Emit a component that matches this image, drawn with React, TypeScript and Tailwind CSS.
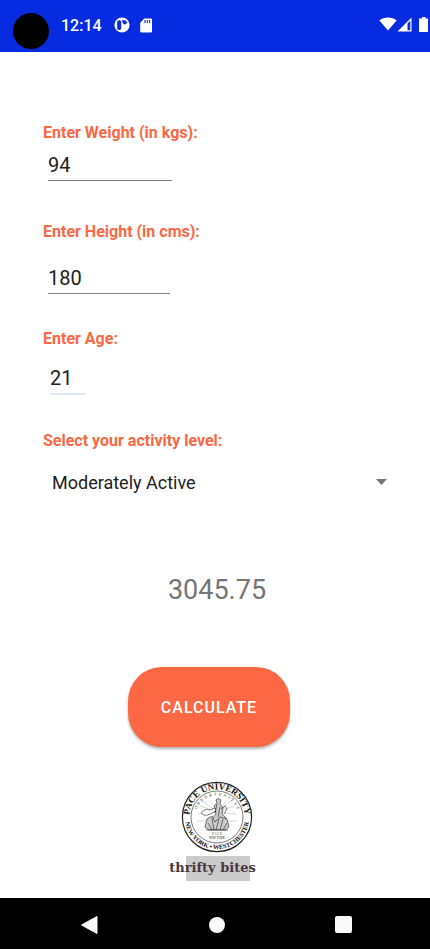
import { useState } from "react";
import type { ReactNode } from "react";

function StatusBar() {
  return (
    <header className="flex h-[52px] items-center bg-[#062be0] pl-[13px] pr-0.5 text-white">
      <span className="mt-2.5 size-9 rounded-full bg-black" />
      <span className="ml-3 text-base font-medium">12:14</span>
      <svg className="mb-0.5 ml-3 size-4" viewBox="0 0 16 16" aria-hidden="true">
        <circle cx="8" cy="8" r="7.6" fill="#fff" />
        <rect x="3.2" y="3.2" width="4" height="9.8" rx="1.8" fill="#062be0" />
        <circle cx="10.8" cy="5.3" r="2.1" fill="#062be0" />
        <path d="M8 3.200h2v2L8 4.600z" fill="#062be0" />
      </svg>
      <svg className="mb-0.5 ml-[10px] h-[15px] w-3" viewBox="0 0 12 15" aria-hidden="true">
        <path
          d="M4.2 0.5H10.7A1.3 1.3 0 0 1 12 1.8V13.2A1.3 1.3 0 0 1 10.7 14.5H1.5A1.3 1.3 0 0 1 .2 13.2V4.8z"
          fill="#fff"
        />
        <path d="M5 2v3M7.3 2v3M9.6 2v3" stroke="#062be0" strokeWidth="1.1" />
      </svg>
      <svg className="mb-1 ml-auto h-[14px] w-[18px]" viewBox="0 0 18 14" aria-hidden="true">
        <path d="M.4 3.4C5.400-.4 12.600-.4 17.600 3.400L9 13.600z" fill="#fff" />
      </svg>
      <svg className="mb-1 h-[15px] w-[15px]" viewBox="0 0 15 15" aria-hidden="true">
        <path d="M.5 14.500 14.500.5V14.500z" fill="#fff" />
        <path d="M10.500 6.500 13.300 3.700V13.300H10.500z" fill="#062be0" />
      </svg>
      <svg className="mb-1 ml-[7px] h-[15px] w-[9px]" viewBox="0 0 9 15" aria-hidden="true">
        <path d="M3 0h3.500v1.500H9V15H0V1.500h3z" fill="#fff" />
      </svg>
    </header>
  );
}

function FieldLabel({ htmlFor, children }: { htmlFor: string; children: ReactNode }) {
  return (
    <label htmlFor={htmlFor} className="block text-base/5 font-bold text-[#fb6843]">
      {children}
    </label>
  );
}

const inputBase = "block h-8 text-xl text-[#212121] outline-none";

function Seal() {
  return (
    <svg className="size-[72px]" viewBox="0 0 72 72" role="img" aria-label="Pace University seal">
      <defs>
        <path id="seal-top" d="M10 46A27.800 27.800 0 1 1 62 46" />
        <path id="seal-inner" d="M17 46A21.500 21.500 0 1 1 55 46" />
        <path id="seal-bottom" d="M3.800 36A32.200 32.200 0 0 0 68.200 36" />
      </defs>
      <g fill="none" stroke="#222">
        <circle cx="36" cy="36" r="34.600" strokeWidth="1.200" />
        <circle cx="36" cy="36" r="26" strokeWidth=".6" />
      </g>
      <g fill="#111" textAnchor="middle" fontFamily="Liberation Serif, serif">
        <text fontSize="9" fontWeight="700">
          <textPath href="#seal-top" startOffset="50%">PACE UNIVERSITY</textPath>
        </text>
        <text fontSize="4">
          <textPath href="#seal-inner" startOffset="50%">
            {"O\u00a0 P\u00a0 P\u00a0 O\u00a0 R\u00a0 T\u00a0 U\u00a0 N\u00a0 I\u00a0 T\u00a0 A\u00a0 S"}
          </textPath>
        </text>
        <text fontSize="6.4" fontWeight="700">
          <textPath href="#seal-bottom" startOffset="50%">NEW YORK • WESTCHESTER</textPath>
        </text>
        <text x="36" y="54" fontSize="3">P A C E</text>
        <text x="36" y="58" fontSize="3">NEW YORK</text>
      </g>
      <path
        d="M36 31 19 25M36 31 17 33M36 31 22 20M36 31 45 20M36 31 50 20M36 31 53 25M36 31 55 33M16 40h10M46 40h10"
        fill="none"
        stroke="#999"
        strokeWidth=".4"
      />
      <g fill="none" stroke="#222" strokeWidth=".6" strokeLinejoin="round">
        <path d="M35 19q3-3 5 0l-1 4 3 4-1 6 4 4-2 7h-9l-3-6 4-5-2-8 3-3z" fill="#ccc" />
        <path d="M20 32q4-5 9-3l5-2 1 3-6 3q-5 3-9-1z" fill="#fff" />
        <path d="M26 38l5-3 3 6 5-5 7 2 2 8-4 3H28l-4-3z" fill="#ccc" />
        <path d="M27 42l4 7M31 37l2 12M38 38l-3 11M42 38l-3 11M46 42l-4 7M36 23l-2 9M39 26l-2 10M25 49h22" />
        <path d="M40 28l4-3 2 3-3 5" />
      </g>
    </svg>
  );
}

function Brand() {
  return (
    <div className="ml-[3px] mt-[34px] flex flex-col items-center">
      <Seal />
      <div className="ml-0.5 mt-[3px] flex h-[25px] w-16 items-center justify-center bg-[#cbcbcb]">
        <span className="mr-2.5 whitespace-nowrap pb-0.5 font-['DejaVu_Serif',serif] text-[13px] font-bold text-[#493642]">
          thrifty bites
        </span>
      </div>
    </div>
  );
}

function NavigationBar() {
  return (
    <nav className="grid h-[51px] grid-cols-3 place-items-center bg-black pb-1 pl-[27px] pr-[23px] pt-1.5">
      <button type="button" aria-label="Back">
        <svg className="size-5" viewBox="0 0 20 20">
          <path d="M17 1.500V18.500L1.500 10z" fill="#fafafa" stroke="#fafafa" strokeLinejoin="round" />
        </svg>
      </button>
      <button type="button" aria-label="Home" className="size-4 rounded-full bg-[#fafafa]" />
      <button type="button" aria-label="Recent apps" className="size-[17px] rounded-xs bg-[#fafafa]" />
    </nav>
  );
}

const factors: Record<string, number> = {
  Sedentary: 1.2,
  "Lightly Active": 1.375,
  "Moderately Active": 1.55,
  "Very Active": 1.725,
};

export default function App() {
  const [weight, setWeight] = useState("94");
  const [height, setHeight] = useState("180");
  const [age, setAge] = useState("21");
  const [level, setLevel] = useState("Moderately Active");
  const [result, setResult] = useState("3045.75");

  const calculate = () => {
    const base = 10 * Number(weight) + 6.25 * Number(height) - 5 * Number(age) + 5;
    setResult((base * factors[level]).toFixed(2));
  };

  return (
    <div className="flex min-h-screen flex-col bg-white font-[Roboto,sans-serif]">
      <StatusBar />
      <main className="flex grow flex-col px-[43px] pt-[71px]">
        <FieldLabel htmlFor="weight">Enter Weight (in kgs):</FieldLabel>
        <input
          id="weight"
          inputMode="decimal"
          value={weight}
          onChange={(e) => setWeight(e.target.value)}
          className={`${inputBase} ml-[5px] mt-1.5 w-[124px] border-b border-[#808080]`}
        />
        <div className="mt-[41px]">
          <FieldLabel htmlFor="height">Enter Height (in cms):</FieldLabel>
        </div>
        <input
          id="height"
          inputMode="decimal"
          value={height}
          onChange={(e) => setHeight(e.target.value)}
          className={`${inputBase} ml-[5px] mt-5 w-[122px] border-b border-[#808080]`}
        />
        <div className="mt-[35px]">
          <FieldLabel htmlFor="age">Enter Age:</FieldLabel>
        </div>
        <input
          id="age"
          inputMode="numeric"
          value={age}
          onChange={(e) => setAge(e.target.value)}
          className={`${inputBase} ml-[7px] mt-3.5 w-[35px] border-b-2 border-[#dce7f1]`}
        />
        <div className="mt-9">
          <FieldLabel htmlFor="activity">Select your activity level:</FieldLabel>
        </div>
        <div className="mt-4 grid items-center">
          <select
            id="activity"
            value={level}
            onChange={(e) => setLevel(e.target.value)}
            className="col-start-1 row-start-1 h-8 w-full appearance-none bg-transparent pl-[9px] text-lg text-[#212121] outline-none"
          >
            {Object.keys(factors).map((name) => (
              <option key={name}>{name}</option>
            ))}
          </select>
          <svg
            className="pointer-events-none col-start-1 row-start-1 mb-0.5 h-[6px] w-[11px] justify-self-end"
            viewBox="0 0 11 6"
            aria-hidden="true"
          >
            <path d="M0 0h11L5.500 6z" fill="#757575" />
          </svg>
        </div>
        <output htmlFor="weight height age activity" className="ml-1 mt-[75px] block text-center text-[27px]/8 text-[#757575]">
          {result}
        </output>
        <button
          type="button"
          onClick={calculate}
          className="mr-3 mt-[61px] h-20 w-[162px] self-center rounded-[34px] bg-[#fb6843] pt-0.5 text-base font-medium tracking-[1px] text-white shadow-[0_2px_3px_rgba(0,0,0,0.3)]"
        >
          CALCULATE
        </button>
        <Brand />
      </main>
      <NavigationBar />
    </div>
  );
}
